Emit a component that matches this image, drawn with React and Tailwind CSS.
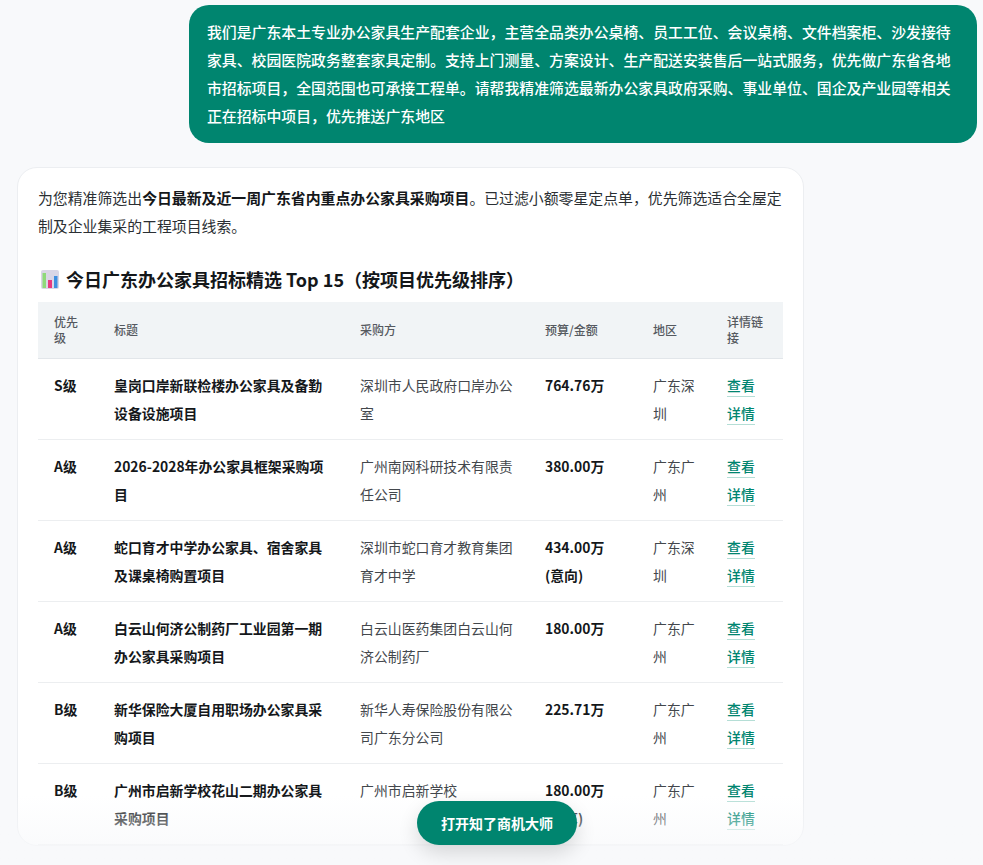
const rows = [
  { level: "S级", title: "皇岗口岸新联检楼办公家具及备勤设备设施项目", buyer: "深圳市人民政府口岸办公室", budget: "764.76万", region: "广东深圳" },
  { level: "A级", title: "2026-2028年办公家具框架采购项目", buyer: "广州南网科研技术有限责任公司", budget: "380.00万", region: "广东广州" },
  { level: "A级", title: "蛇口育才中学办公家具、宿舍家具及课桌椅购置项目", buyer: "深圳市蛇口育才教育集团育才中学", budget: "434.00万 (意向)", region: "广东深圳" },
  { level: "A级", title: "白云山何济公制药厂工业园第一期办公家具采购项目", buyer: "白云山医药集团白云山何济公制药厂", budget: "180.00万", region: "广东广州" },
  { level: "B级", title: "新华保险大厦自用职场办公家具采购项目", buyer: "新华人寿保险股份有限公司广东分公司", budget: "225.71万", region: "广东广州" },
  { level: "B级", title: "广州市启新学校花山二期办公家具采购项目", buyer: "广州市启新学校", budget: "180.00万 (预算)", region: "广东广州" },
]

const ChartEmoji = () => (
  <svg width="18" height="19" viewBox="0 0 18 19" className="shrink-0">
    <rect width="18" height="19" rx="2" fill="#d9d6e6" />
    <rect x="1.5" y="3" width="3.5" height="15" fill="#8fd97a" />
    <rect x="7" y="10" width="4" height="8" fill="#e8387f" />
    <rect x="13" y="6" width="3.5" height="12" fill="#3f8fe0" />
  </svg>
)

const Th = ({ children }) => (
  <th className="px-4 py-3 text-left align-middle text-[12px] leading-[16px] font-medium text-[#55595f] border-b border-[#e2e6ea]">
    {children}
  </th>
)

export default function App() {
  return (
    <div className="relative h-[865px] overflow-hidden bg-[#f8f9fb] pt-[5px] font-['Noto_Sans_CJK_SC','Noto_Sans',sans-serif] text-[#1a1d21]">
      <div className="flex justify-end pr-[6px]">
        <div className="w-[788px] rounded-[20px] bg-[#00856f] px-[18px] py-[13px] text-[14.88px] leading-[28px] font-medium text-white">
          我们是广东本土专业办公家具生产配套企业，主营全品类办公桌椅、员工工位、会议桌椅、文件档案柜、沙发接待家具、校园医院政务整套家具定制。支持上门测量、方案设计、生产配送安装售后一站式服务，优先做广东省各地市招标项目，全国范围也可承接工程单。请帮我精准筛选最新办公家具政府采购、事业单位、国企及产业园等相关正在招标中项目，优先推送广东地区
        </div>
      </div>

      <div className="ml-[17px] mt-[24px] w-[787px] rounded-[20px] border border-[#eceef1] bg-white px-[20px] pt-[16px]">
        <p className="text-[14.88px] leading-[28px] text-[#2b2f33]">
          为您精准筛选出<strong className="font-bold text-[#14171a]">今日最新及近一周广东省内重点办公家具采购项目</strong>。已过滤小额零星定点单，优先筛选适合全屋定制及企业集采的工程项目线索。
        </p>
        <h3 className="mt-[25px] mb-[9px] flex items-center gap-[7px] pl-[3px] text-[18px] leading-[28px] font-bold text-[#14171a]">
          <ChartEmoji />
          <span>今日广东办公家具招标精选 Top 15（按项目优先级排序）</span>
        </h3>
        <table className="w-[745px] table-fixed border-collapse text-[13.88px] leading-[28px]">
          <colgroup>
            <col className="w-[60px]" />
            <col className="w-[246px]" />
            <col className="w-[185px]" />
            <col className="w-[108px]" />
            <col className="w-[74px]" />
            <col className="w-[72px]" />
          </colgroup>
          <thead className="bg-[#f1f4f6]">
            <tr className="h-[56px]">
              <Th>优先级</Th>
              <Th>标题</Th>
              <Th>采购方</Th>
              <Th>预算/金额</Th>
              <Th>地区</Th>
              <Th>详情链接</Th>
            </tr>
          </thead>
          <tbody>
            {rows.map((row, i) => (
              <tr key={i} className="border-b border-[#eceef0]">
                <td className="px-4 py-3 align-top font-bold text-[#14171a]">{row.level}</td>
                <td className="px-4 py-3 align-top font-bold text-[#14171a]">{row.title}</td>
                <td className="px-4 py-3 align-top text-[#43474c]">{row.buyer}</td>
                <td className="px-4 py-3 align-top font-bold text-[#14171a]">{row.budget}</td>
                <td className="px-4 py-3 align-top text-[#43474c]">{row.region}</td>
                <td className="px-4 py-3 align-top">
                  <a className="border-b border-[#b5ded6] pb-[1px] font-medium text-[#00856f]">查看详情</a>
                </td>
              </tr>
            ))}
          </tbody>
        </table>
      </div>

      <div className="absolute inset-x-0 bottom-0 h-[70px] bg-gradient-to-b from-[#f8f9fb]/0 to-[#f8f9fb]" />
      <button className="absolute left-[417px] top-[801px] h-[44px] w-[160px] rounded-full bg-[#00856f] text-[14px] font-bold text-white shadow-[0_8px_20px_rgba(0,0,0,0.14)]">
        打开知了商机大师
      </button>
    </div>
  )
}
